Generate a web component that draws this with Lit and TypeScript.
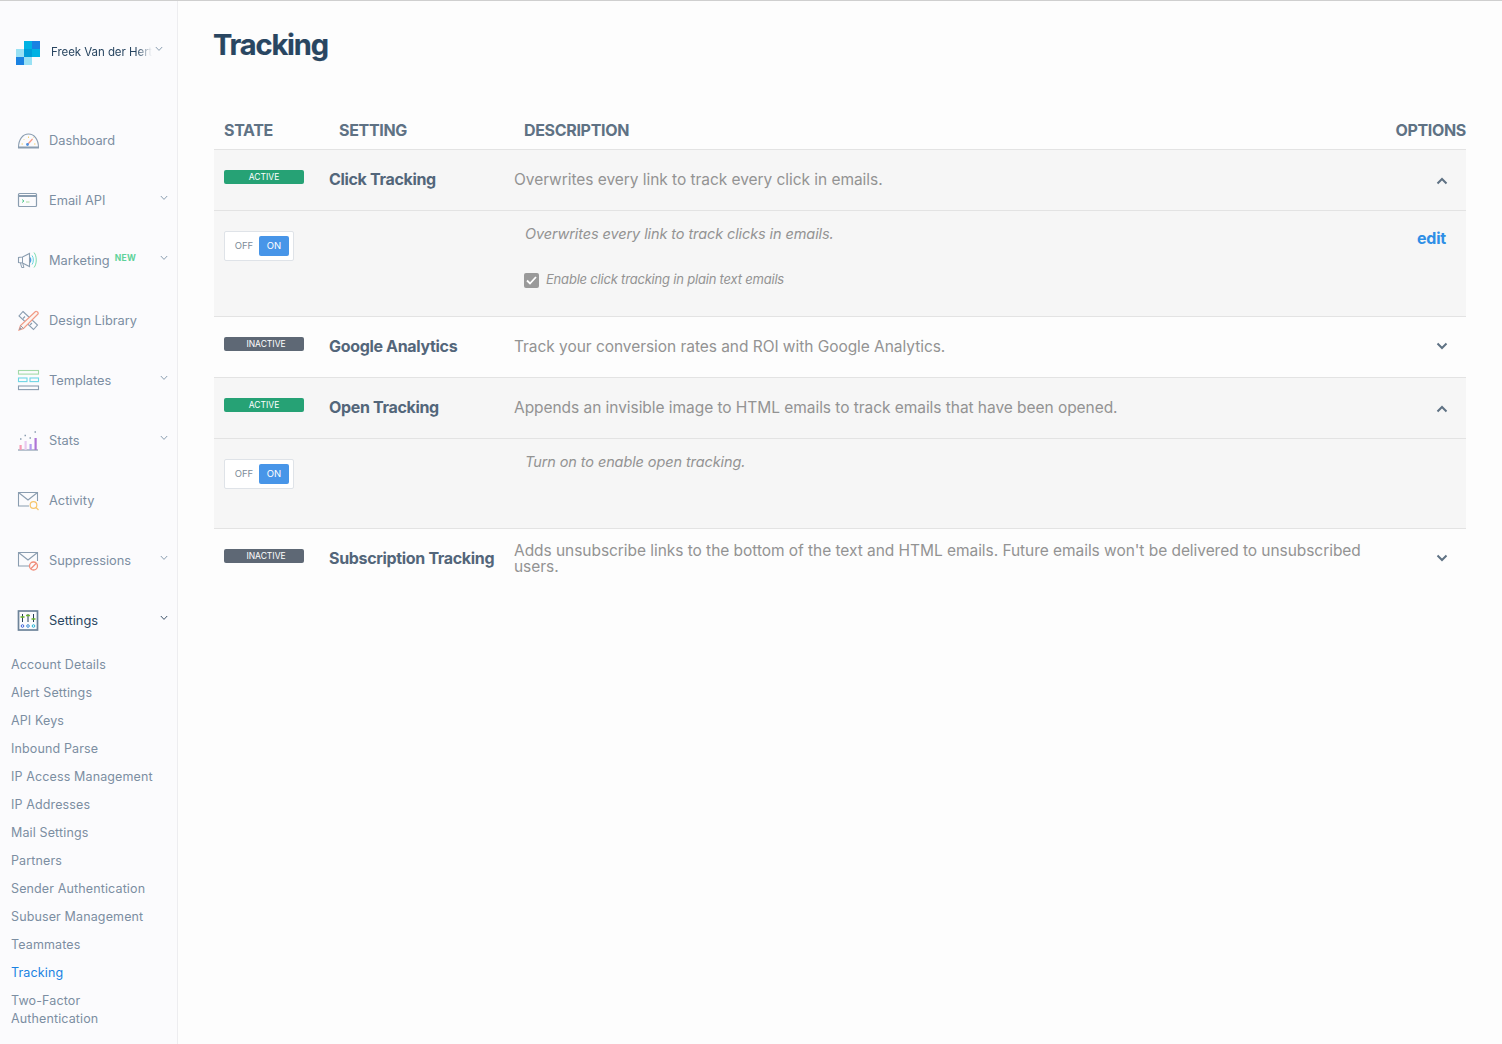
import { LitElement, html, css, svg } from "lit";
import { customElement } from "lit/decorators.js";

const chev = (up = false) => html`<svg class="chev" width="12" height="8" viewBox="0 0 12 8" fill="none" stroke="currentColor" stroke-width="2"><path d="${up ? "M1.5 6.5 6 2l4.5 4.5" : "M1.5 1.5 6 6l4.5-4.5"}"/></svg>`;
const small = () => html`<svg class="small" width="8" height="6" viewBox="0 0 8 6" fill="none" stroke="currentColor" stroke-width="1"><path d="M.8 1 4 4.4 7.2 1"/></svg>`;

const G = "#8a9db0";
const icons: Record<string, unknown> = {
  dash: svg`<path d="M1.500 18.500C1.500 10 6 5 11.500 5S21.500 10 21.500 18.500Z" fill="none" stroke="${G}" stroke-width="1.100"/><path d="M1 18.500h21" stroke="${G}" stroke-width="2"/><path d="M11 15l4.500-5" stroke="#f79b86" stroke-width="1.300"/><circle cx="10.500" cy="15.500" r="1.400" fill="#4d8fe0"/><path d="M4.500 15h1.500M6.500 10l.7.7M11.500 7.500v1.500M16.500 8.500l-.7.7M18.500 15H17" stroke="#f5d06f"/>`,
  api: svg`<rect x="1.500" y="4.500" width="18" height="13" rx="1" fill="none" stroke="${G}" stroke-width="1.200"/><path d="M1.500 7h18" stroke="${G}" stroke-width="2"/><path d="M5 10.500l2 1.500-2 1.500" fill="none" stroke="#53c98d"/><path d="M9 13h3.500" stroke="#a9d9a0"/>`,
  mkt: svg`<path d="M1.500 8.500v5l4 .5 7 3.500V4.500L5.500 8Z" fill="none" stroke="${G}" stroke-width="1.100"/><path d="M5.500 8v6" stroke="${G}"/><path d="M3.500 14l1.200 4.500h2.200L5.800 14.500" fill="none" stroke="${G}"/><path d="M13 8c1.800 1 1.800 5 0 6Z" fill="#4d9ce0"/><path d="M15 6.500c1.800 2 1.800 7 0 9" fill="none" stroke="#63d6e0"/><path d="M17 3.500c3 3.500 3 11.500 0 15" fill="none" stroke="#7bdcae"/>`,
  lib: svg`<g fill="none" stroke="${G}" stroke-width="1.100"><path d="M6 2.500 20.500 16l-4 4.500L2 7Z"/><path d="M6 9.500l2-2M9.500 12.500l2-2M13 16l2-2"/></g><path d="M18.500 2.500c1-.9 3.500 1.500 2.500 2.500L6.500 19.500 2 21l1.500-4.500Z" fill="#fbf5f2" stroke="#f29a85" stroke-width="1.200"/><path d="M3.500 16.500l3 3" stroke="${G}"/><path d="M2 21l1-3 2 2Z" fill="${G}"/>`,
  tpl: svg`<rect x="1.500" y="1.500" width="20" height="3.600" fill="none" stroke="#a3d9a8" stroke-width="1.100"/><rect x="1.500" y="9" width="8.500" height="3.600" fill="none" stroke="#6fd6e4" stroke-width="1.100"/><rect x="13" y="9" width="8.500" height="3.600" fill="none" stroke="#6fd6e4" stroke-width="1.100"/><rect x="1.500" y="17" width="20" height="3.600" fill="none" stroke="${G}" stroke-width="1.100"/>`,
  stats: svg`<path d="M1 21h20" stroke="${G}" stroke-width="1.200"/><rect x="2.500" y="16" width="2.200" height="5" fill="#f79ab5"/><rect x="7.500" y="12" width="2.200" height="9" fill="#e9c9ef"/><rect x="12.500" y="15" width="2.200" height="6" fill="#b39cf0"/><rect x="17.500" y="9" width="2.200" height="12" fill="#ae74d6"/><path d="M3 10h1.500M7.500 6.500H9M12.500 9H14M17.500 3H19" stroke="${G}" stroke-width="1.500"/>`,
  act: svg`<path d="M20.500 12V3.500h-19V17H12M1.500 3.500 11 11l9.500-7.500" fill="none" stroke="${G}" stroke-width="1.100"/><circle cx="16.500" cy="16" r="3.300" fill="none" stroke="#f7c56b" stroke-width="1.200"/><path d="M19 18.500l2.500 2.500" stroke="#f7c56b" stroke-width="1.200"/>`,
  sup: svg`<path d="M20.500 12V3.500h-19V17H12M1.500 3.500 11 11l9.500-7.500" fill="none" stroke="${G}" stroke-width="1.100"/><circle cx="16.500" cy="17" r="4" fill="none" stroke="#f08d7b" stroke-width="1.300"/><path d="M13.800 19.800l5.500-5.500" stroke="#f08d7b" stroke-width="1.300"/>`,
  set: svg`<rect x="1.500" y="2" width="19" height="19" fill="none" stroke="#6d8399" stroke-width="1.700"/><path d="M5.500 5v8M11 5v8M16.500 5v8" stroke="#263f57" stroke-width="1"/><path d="M3.500 8h4M9 6.500h4M14.500 10h4" stroke="#6cb52d" stroke-width="1.600"/><circle cx="5.500" cy="17" r="1.300" fill="none" stroke="#3f62d8"/><circle cx="11" cy="17" r="1.300" fill="none" stroke="#3f8fd8"/><circle cx="16.500" cy="17" r="1.300" fill="none" stroke="#25b7d8"/>`,
};

const nav = [
  { i: "dash", t: "Dashboard" },
  { i: "api", t: "Email API", c: true },
  { i: "mkt", t: "Marketing", c: true, n: true },
  { i: "lib", t: "Design Library" },
  { i: "tpl", t: "Templates", c: true },
  { i: "stats", t: "Stats", c: true },
  { i: "act", t: "Activity" },
  { i: "sup", t: "Suppressions", c: true },
  { i: "set", t: "Settings", c: true, a: true },
];
const sub = ["Account Details", "Alert Settings", "API Keys", "Inbound Parse", "IP Access Management", "IP Addresses", "Mail Settings", "Partners", "Sender Authentication", "Subuser Management", "Teammates", "Tracking", "Two-Factor Authentication"];

const toggle = () => html`<div class="toggle"><span class="off">OFF</span><span class="on">ON</span></div>`;

@customElement("app-root")
export class AppRoot extends LitElement {
  static styles = css`
    :host { display: block; width: 1502px; height: 1044px; overflow: hidden; background: #fdfdfd; font-family: Inter, "Liberation Sans", sans-serif; border-top: 1px solid #cfcfcf; box-sizing: border-box; }
    .app { display: flex; height: 1043px; }
    aside { flex: none; box-sizing: border-box; background: #fbfbfd; border-right: 1px solid #ededf0; width: 178px; padding-top: 40px; overflow: hidden; }
    .user { display: flex; align-items: flex-start; height: 69px; padding-left: 16px; }
    .name { margin: 5px 0 0 11px; width: 101px; font-size: 11.5px; line-height: 13px; color: #294661; white-space: nowrap; overflow: hidden; -webkit-mask-image: linear-gradient(90deg,#000 85%,transparent); mask-image: linear-gradient(90deg,#000 85%,transparent); letter-spacing: -.05px; }
    .uchev { color: #5d7186; margin: 0 0 0 3px; display: block; line-height: 0; }
    .uchev .small { top: 0; margin-top: 5px; }
    .item { display: flex; align-items: center; height: 60px; padding: 0 9px 0 17px; font-size: 12.8px; color: #7c8ea2; position: relative; }
    .item svg.ic { flex: none; margin-right: 9px; }
    .item.active { color: #294661; }
    .new { font-size: 8.500px; font-weight: 700; color: #5ed29a; margin-left: 5px; letter-spacing: .3px; position: relative; top: -2px; }
    .small { color: #8a9db0; margin-left: auto; position: relative; top: -2px; }
    .item.active .small { color: #3b5168; }
    .subs { padding: 0 11px; margin-top: 1px; display: flex; flex-direction: column; }
    .sub { font-size: 12.500px; line-height: 18px; color: #7c8ea2; padding: 5px 0; letter-spacing: .13px; }
    .sub.cur { color: #1a82e2; }
    main { flex: 1; padding: 0 36px; min-width: 0; }
    h1 { margin: 0 0 0 -1px; font-size: 29px; font-weight: 700; line-height: 36px; color: #294661; padding-top: 26px; letter-spacing: -1.15px; height: 92px; box-sizing: border-box; -webkit-text-stroke: .2px #294661; }
    .head { display: grid; grid-template-columns: 115px 185px 1fr auto; height: 57px; align-items: center; padding-left: 10px; font-size: 16px; font-weight: 700; color: #5f7284; border-bottom: 1px solid #e3e3e3; box-sizing: border-box; padding-top: 18px; letter-spacing: -.33px; }
    .row { border-bottom: 1px solid #e3e3e3; }
    .row.open { background: #f6f6f6; }
    .top { display: grid; grid-template-columns: 105px 185px 1fr 40px; padding: 0 10px; height: 60px; align-items: flex-start; }
    .row.open .top { border-bottom: 1px solid #e3e3e3; }
    .row.tall .top { height: 69px; }
    .badge { width: 80px; height: 14px; margin-top: 20px; border-radius: 2px; font-size: 8.500px; line-height: 14px; text-align: center; color: #fff; background: #26a275; }
    .badge.in { background: #5e6875; padding-left: 4px; width: 76px; }
    .title { font-size: 16px; font-weight: 700; color: #53667a; line-height: 20px; margin-top: 19px; letter-spacing: -.33px; white-space: nowrap; }
    .desc { font-size: 15.5px; line-height: 16px; color: #939393; margin-top: 22px; letter-spacing: -.05px; padding-right: 50px; }
    .row.tall .desc { margin-top: 14px; }
    .cv { color: #5f7284; display: flex; justify-content: flex-end; padding: 27px 8px 0 0; }
    .cv.down { padding-top: 25px; }
    .detail { display: grid; grid-template-columns: 70px 231px 1fr auto; padding: 0 20px 0 10px; }
    .toggle { width: 70px; height: 30px; margin-top: 20px; box-sizing: border-box; background: #fff; border: 1px solid #dfe3e8; border-radius: 2px; display: flex; align-items: center; padding: 4px; font-size: 9.500px; }
    .off { color: #7d8b99; width: 30px; text-align: center; line-height: 19px; height: 20px; }
    .on { background: #4795e8; color: #fff; width: 30px; height: 20px; line-height: 19px; text-align: center; border-radius: 2px; }
    .note { font-size: 14.500px; line-height: 18px; font-style: italic; color: #939393; padding-top: 14px; letter-spacing: -.1px; }
    .check { display: flex; align-items: flex-start; gap: 7px; font-size: 13px; margin: 28px 0 0 -1px; line-height: 16px; letter-spacing: -.2px; }
    .box { width: 15px; height: 15px; margin-top: 2px; background: #9a9a9a; border-radius: 2px; display: flex; align-items: center; justify-content: center; flex: none; }
    .edit { font-size: 16px; font-weight: 700; color: #2f8fe6; padding-top: 17px; line-height: 20px; letter-spacing: -.2px; }
    .d1 { height: 105px; }
    .d2 { height: 89px; }
    .last { border-bottom: 0; }
  `;

  private row(state: boolean, title: string, desc: string, open: boolean, extra?: unknown, tall = false, last = false) {
    return html`<div class="row ${open ? "open" : ""} ${tall ? "tall" : ""} ${last ? "last" : ""}">
      <div class="top">
        <div class="badge ${state ? "" : "in"}">${state ? "ACTIVE" : "INACTIVE"}</div>
        <div class="title">${title}</div>
        <div class="desc">${desc}</div>
        <div class="cv ${open ? "" : "down"}">${chev(open)}</div>
      </div>
      ${extra ?? ""}
    </div>`;
  }

  render() {
    return html`<div class="app">
      <aside>
        <div class="user">
          <svg width="24" height="24" viewBox="0 0 24 24"><rect x="8" width="8" height="8" fill="#00b2e3"/><rect x="16" width="8" height="8" fill="#1a82e2"/><rect y="8" width="8" height="8" fill="#99e1f4"/><rect x="8" y="8" width="8" height="8" fill="#009dd9"/><rect x="16" y="8" width="8" height="8" fill="#00b2e3"/><rect y="16" width="8" height="8" fill="#1a82e2"/><rect x="8" y="16" width="8" height="8" fill="#99e1f4"/></svg>
          <div class="name">Freek Van der Hert</div>
          <span class="uchev">${small()}</span>
        </div>
        <nav>
          ${nav.map(n => html`<div class="item ${n.a ? "active" : ""}">
            <svg class="ic" width="23" height="23" viewBox="0 0 23 23">${icons[n.i]}</svg>
            <span>${n.t}</span>
            ${n.n ? html`<span class="new">NEW</span>` : ""}
            ${n.c ? small() : ""}
          </div>`)}
        </nav>
        <div class="subs">${sub.map(s => html`<div class="sub ${s === "Tracking" ? "cur" : ""}">${s}</div>`)}</div>
      </aside>
      <main>
        <h1>Tracking</h1>
        <div class="head"><span>STATE</span><span>SETTING</span><span>DESCRIPTION</span><span>OPTIONS</span></div>
        ${this.row(true, "Click Tracking", "Overwrites every link to track every click in emails.", true, html`<div class="detail d1">
          ${toggle()}
          <div></div>
          <div class="note">Overwrites every link to track clicks in emails.
            <div class="check"><span class="box"><svg width="11" height="9" viewBox="0 0 11 9" fill="none" stroke="#fff" stroke-width="1.800"><path d="M1 4.500 4 7.500 10 1"/></svg></span>Enable click tracking in plain text emails</div>
          </div>
          <div class="edit">edit</div>
        </div>`)}
        ${this.row(false, "Google Analytics", "Track your conversion rates and ROI with Google Analytics.", false)}
        ${this.row(true, "Open Tracking", "Appends an invisible image to HTML emails to track emails that have been opened.", true, html`<div class="detail d2">
          ${toggle()}
          <div></div>
          <div class="note">Turn on to enable open tracking.</div>
          <div></div>
        </div>`)}
        ${this.row(false, "Subscription Tracking", "Adds unsubscribe links to the bottom of the text and HTML emails. Future emails won't be delivered to unsubscribed users.", false, undefined, true, true)}
      </main>
    </div>`;
  }
}
